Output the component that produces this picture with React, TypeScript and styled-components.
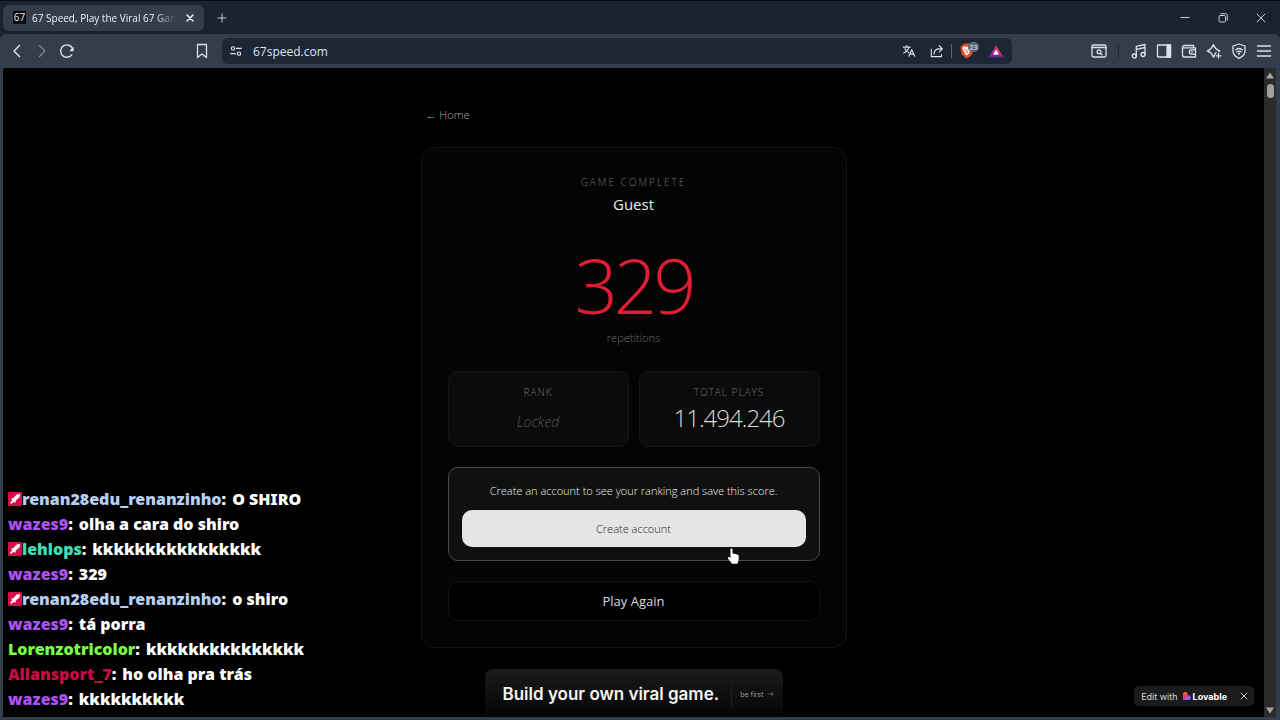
import React from "react";
import styled, { createGlobalStyle } from "styled-components";

const ui = `"Open Sans", "Noto Sans", sans-serif`;
const grotesk = `Inter, "Liberation Sans", sans-serif`;

const GlobalStyle = createGlobalStyle`
  *, *::before, *::after { box-sizing: border-box; }
  body { margin: 0; background: #000; font-family: ${ui}; overflow: hidden; }
  button, input { font: inherit; color: inherit; }
  button { border: 0; padding: 0; background: none; cursor: pointer; }
  p, h1, h2, ul { margin: 0; padding: 0; font-weight: inherit; }
  svg { display: block; flex: none; }
`;

const Window = styled.div`
  height: 100vh;
  display: flex;
  flex-direction: column;
  background: #1a2231;
  border-top: 1px solid #060b1c;
`;

const TabStrip = styled.header`
  flex: none;
  height: 33px;
  display: flex;
  align-items: center;
  padding: 0 0 0 3px;
  color: #c9cfd8;
`;

const Tab = styled.div`
  width: 201px;
  height: 26px;
  display: flex;
  align-items: center;
  padding: 0 0 0 10px;
  border-radius: 6px;
  background: #343d4c;
  color: #eef1f5;
  font-size: 10px;
`;

const Favicon = styled.span`
  flex: none;
  width: 13px;
  height: 13px;
  margin-right: 6px;
  background: #0b0b0b;
  color: #e8e8e8;
  font-size: 10px;
  line-height: 13px;
  text-align: center;
`;

const TabTitle = styled.span`
  flex: 1;
  overflow: hidden;
  white-space: nowrap;
  font-weight: 500;
  mask-image: linear-gradient(90deg, #000 86%, transparent);
`;

const IconButton = styled.button<{ $w?: number; $dim?: boolean }>`
  flex: none;
  width: ${(p) => p.$w ?? 25}px;
  height: 24px;
  display: flex;
  align-items: center;
  justify-content: center;
  opacity: ${(p) => (p.$dim ? 0.45 : 1)};
`;

const WindowControls = styled.div`
  display: flex;
  margin-left: auto;
`;

const Toolbar = styled.nav`
  flex: none;
  height: 34px;
  display: flex;
  align-items: center;
  padding: 0 4px;
  border-radius: 6px 6px 0 0;
  background: #343d4c;
  color: #dde2e9;
`;

const Spacer = styled.span`
  flex: 0 1 110px;
`;

const AddressBar = styled.div`
  flex: 0 1 790px;
  height: 26px;
  display: flex;
  align-items: center;
  margin-left: 8px;
  padding: 0 6px 0 1px;
  border-radius: 6px;
  background: #1d2635;
`;

const AddressInput = styled.input`
  flex: 1;
  min-width: 0;
  padding: 0 5px;
  border: 0;
  outline: 0;
  background: none;
  color: #dfe4ea;
  font-size: 12px;
`;

const Rule = styled.span<{ $color: string }>`
  flex: none;
  width: 1px;
  height: 14px;
  background: ${(p) => p.$color};
`;

const Tools = styled.div`
  display: flex;
  align-items: center;
  margin-left: auto;
`;

const ToolGap = styled.span`
  width: 7px;
`;

const Frame = styled.div`
  position: relative;
  flex: 1;
  min-height: 0;
  display: flex;
  border: solid #343d4c;
  border-width: 0 4px 3px 3px;
`;

const Page = styled.main`
  flex: 1;
  min-width: 0;
  overflow: hidden;
  padding: 37px 16px 0;
  background: #000;
  border-radius: 3px 0 0 0;
`;

const Column = styled.div`
  width: 100%;
  max-width: 426px;
  margin: 0 auto;
  display: flex;
  flex-direction: column;
`;

const HomeLink = styled.a`
  align-self: flex-start;
  margin-left: 5px;
  color: #a6a6a6;
  font-size: 11px;
  font-weight: 300;
  line-height: 20px;
  text-decoration: none;
`;

const Card = styled.section`
  margin-top: 22px;
  padding: 26px;
  border: 1px solid #141414;
  border-radius: 14px;
  background: #040404;
  text-align: center;
`;

const Caption = styled.p<{ $wide?: boolean }>`
  color: #707070;
  font-size: 10px;
  font-weight: 300;
  line-height: 16px;
  letter-spacing: ${(p) => (p.$wide ? 2 : 1)}px;
  text-transform: uppercase;
`;

const Player = styled.h1`
  color: #ededed;
  font-size: 15px;
  font-weight: 400;
  line-height: 28px;
`;

const Score = styled.p`
  margin-top: 28px;
  color: #e11d33;
  font-size: 76px;
  font-weight: 300;
  line-height: 78px;
  letter-spacing: -4px;
`;

const ScoreUnit = styled.p`
  margin-top: 4px;
  color: #6c6c6c;
  font-size: 11px;
  font-weight: 300;
  line-height: 20px;
`;

const Stats = styled.div`
  display: grid;
  grid-template-columns: 1fr 1fr;
  gap: 10px;
  margin-top: 23px;
`;

const Stat = styled.div`
  height: 76px;
  padding: 12px 8px;
  border: 1px solid #151515;
  border-radius: 10px;
  background: #0b0b0b;
`;

const StatValue = styled.p<{ $locked?: boolean }>`
  color: ${(p) => (p.$locked ? "#565656" : "#dadada")};
  font-size: ${(p) => (p.$locked ? 14 : 24)}px;
  font-style: ${(p) => (p.$locked ? "italic" : "normal")};
  font-weight: 300;
  line-height: ${(p) => (p.$locked ? 44 : 36)}px;
  letter-spacing: ${(p) => (p.$locked ? 0 : -1)}px;
`;

const Signup = styled.div`
  margin-top: 20px;
  padding: 13px;
  border: 1px solid #484848;
  border-radius: 10px;
  background: #101010;
`;

const SignupText = styled.p`
  margin-bottom: 9px;
  color: #f0f0f0;
  font-size: 11px;
  font-weight: 300;
  line-height: 20px;
`;

const Action = styled.button<{ $primary?: boolean }>`
  display: block;
  width: 100%;
  height: ${(p) => (p.$primary ? 37 : 40)}px;
  margin-top: ${(p) => (p.$primary ? 0 : 20)}px;
  border: ${(p) => (p.$primary ? "0" : "1px solid #101010")};
  border-radius: 10px;
  background: ${(p) => (p.$primary ? "#e5e5e5" : "#000")};
  color: ${(p) => (p.$primary ? "#1a1a1a" : "#dcdcdc")};
  font-size: ${(p) => (p.$primary ? 11 : 13)}px;
  font-weight: ${(p) => (p.$primary ? 300 : 400)};
`;

const Banner = styled.a`
  align-self: center;
  width: 298px;
  height: 52px;
  margin-top: 21px;
  display: flex;
  align-items: center;
  padding: 0 9px 2px 18px;
  border-radius: 8px;
  background: linear-gradient(#1b1b1b, #060606 85%);
  color: #f4f4f4;
  font-family: ${grotesk};
  text-decoration: none;
  white-space: nowrap;
`;

const BannerTitle = styled.span`
  flex: 1;
  font-size: 17px;
  font-weight: 600;
`;

const BannerHint = styled.span`
  display: flex;
  align-items: center;
  height: 28px;
  padding-left: 8px;
  border-left: 1px solid #1f1f1f;
  color: #9a9a9a;
  font-size: 7px;
  gap: 4px;
`;

const Scrollbar = styled.div`
  flex: none;
  width: 12px;
  display: flex;
  flex-direction: column;
  align-items: center;
  padding: 4px 0 3px;
  background: #2b2b2b;
`;

const Thumb = styled.span`
  width: 7px;
  height: 14px;
  margin: 5px 0 auto;
  border-radius: 4px;
  background: #9f9f9f;
`;

const Chat = styled.ul`
  position: absolute;
  left: 5px;
  bottom: 6px;
  list-style: none;
  font-family: "Noto Sans", sans-serif;
  font-size: 16px;
  font-weight: 900;
  color: #fff;
`;

const ChatLine = styled.li`
  display: flex;
  align-items: center;
  height: 25px;
  white-space: nowrap;
`;

const Author = styled.span<{ $color: string }>`
  color: ${(p) => p.$color};
`;

const Colon = styled.span`
  margin-right: 6px;
`;

const LovableBadge = styled.aside`
  position: absolute;
  right: 22px;
  bottom: 11px;
  height: 20px;
  display: flex;
  align-items: center;
  border-radius: 5px;
  background: #1b1b1b;
  color: #d8d8d8;
  font-family: ${grotesk};
  font-size: 9px;
`;

const BadgeLink = styled.a`
  display: flex;
  align-items: center;
  padding: 0 7px;
  color: inherit;
  text-decoration: none;
`;

const Brand = styled.strong`
  display: flex;
  align-items: center;
  gap: 2px;
  margin-left: 5px;
  color: #fff;
  font-weight: 700;
`;

const Pointer = styled.svg`
  position: absolute;
  left: 724px;
  top: 480px;
`;

const Icon = ({ size = 16, w = 1.2, children }: { size?: number; w?: number; children: React.ReactNode }) => (
  <svg width={size} height={size} viewBox="0 0 16 16" fill="none" stroke="currentColor" strokeWidth={w} strokeLinecap="round" strokeLinejoin="round" aria-hidden="true">
    {children}
  </svg>
);

const SwordBadge = () => (
  <svg width="14" height="14" viewBox="0 0 14 14" aria-hidden="true">
    <rect width="14" height="14" rx="1" fill="#d3104c" />
    <path d="M12 2 8.7 2.4 4.9 6.6 3.8 6.2 3.2 7 4.3 8.3 2 10.7 3.3 12 5.7 9.7 7 10.8 7.8 10.2 7.4 9.1 11.6 5.3Z" fill="#fff" />
  </svg>
);

type Message = { author: string; color: string; text: string; badge?: boolean };
const messages: Message[] = [
  { author: "renan28edu_renanzinho", color: "#b5d0f2", text: "O SHIRO", badge: true },
  { author: "wazes9", color: "#ab52f0", text: "olha a cara do shiro" },
  { author: "lehlops", color: "#3fe0b8", text: "kkkkkkkkkkkkkkkk", badge: true },
  { author: "wazes9", color: "#ab52f0", text: "329" },
  { author: "renan28edu_renanzinho", color: "#b5d0f2", text: "o shiro", badge: true },
  { author: "wazes9", color: "#ab52f0", text: "tá porra" },
  { author: "Lorenzotricolor", color: "#7dff45", text: "kkkkkkkkkkkkkkk" },
  { author: "Allansport_7", color: "#cc0a42", text: "ho olha pra trás" },
  { author: "wazes9", color: "#ab52f0", text: "kkkkkkkkkk" },
];

export default function App() {
  return (
    <Window>
      <GlobalStyle />
      <TabStrip>
        <Tab>
          <Favicon>67</Favicon>
          <TabTitle>67 Speed, Play the Viral 67 Game</TabTitle>
          <IconButton $w={28} aria-label="Close tab">
            <Icon size={12} w={2}><path d="m4 4 8 8M12 4l-8 8" /></Icon>
          </IconButton>
        </Tab>
        <IconButton $w={36} aria-label="New tab">
          <Icon size={12} w={1.3}><path d="M8 2.500v11M2.500 8h11" /></Icon>
        </IconButton>
        <WindowControls>
          <IconButton $w={38} aria-label="Minimize"><Icon w={1}><path d="M4 7.500h8" /></Icon></IconButton>
          <IconButton $w={38} aria-label="Restore">
            <Icon w={1}><rect x="4" y="5.500" width="6.500" height="6.500" rx="1.300" /><path d="M5.800 3.700h4.500a2 2 0 0 1 2 2v4.500" /></Icon>
          </IconButton>
          <IconButton $w={38} aria-label="Close"><Icon w={1}><path d="m4 4 8 8M12 4l-8 8" /></Icon></IconButton>
        </WindowControls>
      </TabStrip>

      <Toolbar>
        <IconButton aria-label="Back"><Icon w={1.5}><path d="M10.500 2.500 5 8l5.500 5.500" /></Icon></IconButton>
        <IconButton $dim aria-label="Forward"><Icon w={1.3}><path d="M5.500 2.500 11 8l-5.500 5.500" /></Icon></IconButton>
        <IconButton aria-label="Reload">
          <Icon w={1.4}><path d="M12.800 11.800A6.200 6.200 0 1 1 13.700 6" /><path d="M14.600 3.800v4.400h-4.400Z" fill="currentColor" stroke="none" /></Icon>
        </IconButton>
        <Spacer />
        <IconButton aria-label="Bookmark"><Icon w={1.3}><path d="M3.500 1.500h9v13L8 11l-4.500 3.500Z" /></Icon></IconButton>
        <AddressBar>
          <IconButton aria-label="Site settings">
            <Icon size={12} w={1.5}><circle cx="4" cy="4.500" r="2.200" /><path d="M8.500 4.500H15M1 11.500h6.500" /><circle cx="12" cy="11.500" r="2.200" /></Icon>
          </IconButton>
          <AddressInput aria-label="Address" defaultValue="67speed.com" />
          <IconButton $w={28} aria-label="Translate">
            <Icon size={14} w={1.3}><path d="M1.500 3.500h8M5.500 1.800v1.700M8 3.500C7.200 6.500 4.800 8.800 2 10.300M3.300 5.500c1 2 2.600 3.500 4.500 4.500M7.800 14l3.300-7.500L14.500 14M9 11.600h4.300" /></Icon>
          </IconButton>
          <IconButton $w={28} aria-label="Share">
            <Icon size={14} w={1.3}><path d="M1.500 6v8.500h11.500V12M4.500 11.500c.3-4 2.800-6 6-6H14M10.500 2l3.700 3.500L10.500 9" /></Icon>
          </IconButton>
          <Rule $color="#5b6472" />
          <IconButton $w={34} aria-label="Shields">
            <svg width="20" height="18" viewBox="0 0 20 18">
              <path d="M4 2.500 6 1.500h4l2 1 2 1.500-.7 8L10.500 15 8 16.500 5.300 15 2.500 12 1.500 5Z" fill="#e8501f" />
              <path d="M4.200 4.500 7.800 4.700 11.500 4.500 12.300 7.300 10.300 9.800 10.500 11 7.900 13.500 5.200 11 5.600 9.800 3.500 7.300Z" fill="#fff" />
              <path d="m5 7 1.800.6M11 7l-1.800.6M7.900 7.500v2.300M6.700 10.700l1.200-.7 1.200.7" stroke="#e8501f" strokeWidth=".9" fill="none" />
              <rect x="9" y="0" width="11" height="10" rx="5" fill="#606a78" />
              <text x="14.500" y="7.500" fill="#e6e9ed" fontSize="7" textAnchor="middle" fontFamily="Open Sans">23</text>
            </svg>
          </IconButton>
          <IconButton $w={20} aria-label="Rewards">
            <svg width="16" height="14" viewBox="0 0 16 14">
              <path d="M8 1 .5 13.500 8 8.500Z" fill="#a3278b" /><path d="M8 1l7.500 12.500L8 8.500Z" fill="#e5325a" /><path d="M.5 13.500h15L8 8Z" fill="#5b2a91" /><path d="m8 5.500 3 5.300H5Z" fill="#fff" />
            </svg>
          </IconButton>
        </AddressBar>
        <Tools>
          <IconButton aria-label="Find in page">
            <Icon w={1.3}><rect x="1" y="2" width="14" height="12" rx="1.500" /><path d="M1 4.500h14" /><circle cx="8" cy="8.800" r="1.900" /><path d="m9.500 10.300 1.500 1.500" /></Icon>
          </IconButton>
          <ToolGap />
          <Rule $color="#1f2735" />
          <ToolGap />
          <IconButton aria-label="Playlist"><Icon w={1.3}><circle cx="3.300" cy="13" r="2" /><circle cx="12" cy="11.500" r="2" /><path d="M5.300 13V3.300L14 1.500v10M5.300 6.300 14 4.500" /></Icon></IconButton>
          <IconButton aria-label="Sidebar"><Icon w={1.3}><rect x="1.500" y="2" width="13" height="12" rx=".5" /><path d="M11 2h3.500v12H11Z" fill="currentColor" /></Icon></IconButton>
          <IconButton aria-label="Wallet"><Icon w={1.3}><path d="M12.500 4.500v-2h-9a2 2 0 0 0-2 2v7.500a2 2 0 0 0 2 2h11V4.800H2.500M14.500 6.800h-4a2 2 0 0 0 0 4.400h4" /><path d="M10.800 9h.5" /></Icon></IconButton>
          <IconButton aria-label="Assistant"><Icon w={1.3}><path d="M10 9.700C9 10.500 8.500 12 7.500 14.300 6.300 10.800 5 9.200 1.200 7.900 5 6.600 6.200 5 7.400 1.500 8.600 5 10 6.600 13.800 7.900L12.500 8.500M12.500 10.500v4.500M10.200 12.800h4.600" /></Icon></IconButton>
          <IconButton aria-label="VPN"><Icon w={1.3}><path d="M8 1 14 3v5c0 3.500-3 6-6 7.300C5 14 2 11.500 2 8V3Z" /><path d="M4.800 6.800c2-1.600 4.400-1.600 6.400 0M6 8.800c1.300-.9 2.700-.9 4 0" /><circle cx="8" cy="10.700" r=".5" fill="currentColor" /></Icon></IconButton>
          <IconButton aria-label="Menu"><Icon w={1.5}><path d="M1.500 3h13M1.500 8h13M1.500 13h13" /></Icon></IconButton>
        </Tools>
      </Toolbar>

      <Frame>
        <Page>
          <Column>
            <HomeLink href="#home">← Home</HomeLink>
            <Card>
              <Caption $wide>Game complete</Caption>
              <Player>Guest</Player>
              <Score>329</Score>
              <ScoreUnit>repetitions</ScoreUnit>
              <Stats>
                <Stat><Caption>Rank</Caption><StatValue $locked>Locked</StatValue></Stat>
                <Stat><Caption>Total plays</Caption><StatValue>11.494.246</StatValue></Stat>
              </Stats>
              <Signup>
                <SignupText>Create an account to see your ranking and save this score.</SignupText>
                <Action $primary>Create account</Action>
              </Signup>
              <Action>Play Again</Action>
            </Card>
            <Banner href="#build">
              <BannerTitle>Build your own viral game.</BannerTitle>
              <BannerHint>be first <Icon size={6} w={1.5}><path d="M2 8h12M10 4l4 4-4 4" /></Icon></BannerHint>
            </Banner>
          </Column>
        </Page>
        <Scrollbar aria-hidden="true">
          <svg width="8" height="7" viewBox="0 0 8 7"><path d="M4 .5 8 6.500H0Z" fill="#a5a5a5" /></svg>
          <Thumb />
          <svg width="8" height="7" viewBox="0 0 8 7"><path d="M4 6.500 8 .5H0Z" fill="#a5a5a5" /></svg>
        </Scrollbar>

        <Chat>
          {messages.map((m, i) => (
            <ChatLine key={i}>
              {m.badge && <SwordBadge />}
              <Author $color={m.color}>{m.author}</Author>
              <Colon>:</Colon>
              {m.text}
            </ChatLine>
          ))}
        </Chat>
        <LovableBadge>
          <BadgeLink href="#lovable">
            Edit with
            <Brand>
              <svg width="8" height="8" viewBox="0 0 8 8" aria-hidden="true">
                <defs><linearGradient id="heart" x1="0" y1="0" x2=".4" y2="1"><stop offset=".1" stopColor="#ff7a2f" /><stop offset=".5" stopColor="#f5386a" /><stop offset="1" stopColor="#8b5cf6" /></linearGradient></defs>
                <path d="M0 2.300a2.300 2.300 0 0 1 4.600 0v1h1A2.300 2.300 0 0 1 5.600 8H0Z" fill="url(#heart)" />
              </svg>
              Lovable
            </Brand>
          </BadgeLink>
          <IconButton $w={20} aria-label="Dismiss"><Icon size={8} w={1.8}><path d="m2 2 12 12M14 2 2 14" /></Icon></IconButton>
        </LovableBadge>
        <Pointer width="13" height="17" viewBox="0 0 13 17" aria-hidden="true">
          <path d="M3.500 1.500c0-1.300 2-1.300 2 0v4l1.600.3 1.500.3 1.500.4c1 .2 1.600.8 1.600 1.800v3.500l-1.300 4H5L1 10.500C.2 9.300 1.700 8.300 2.600 9.300l.9.900Z" fill="#fff" />
        </Pointer>
      </Frame>
    </Window>
  );
}
